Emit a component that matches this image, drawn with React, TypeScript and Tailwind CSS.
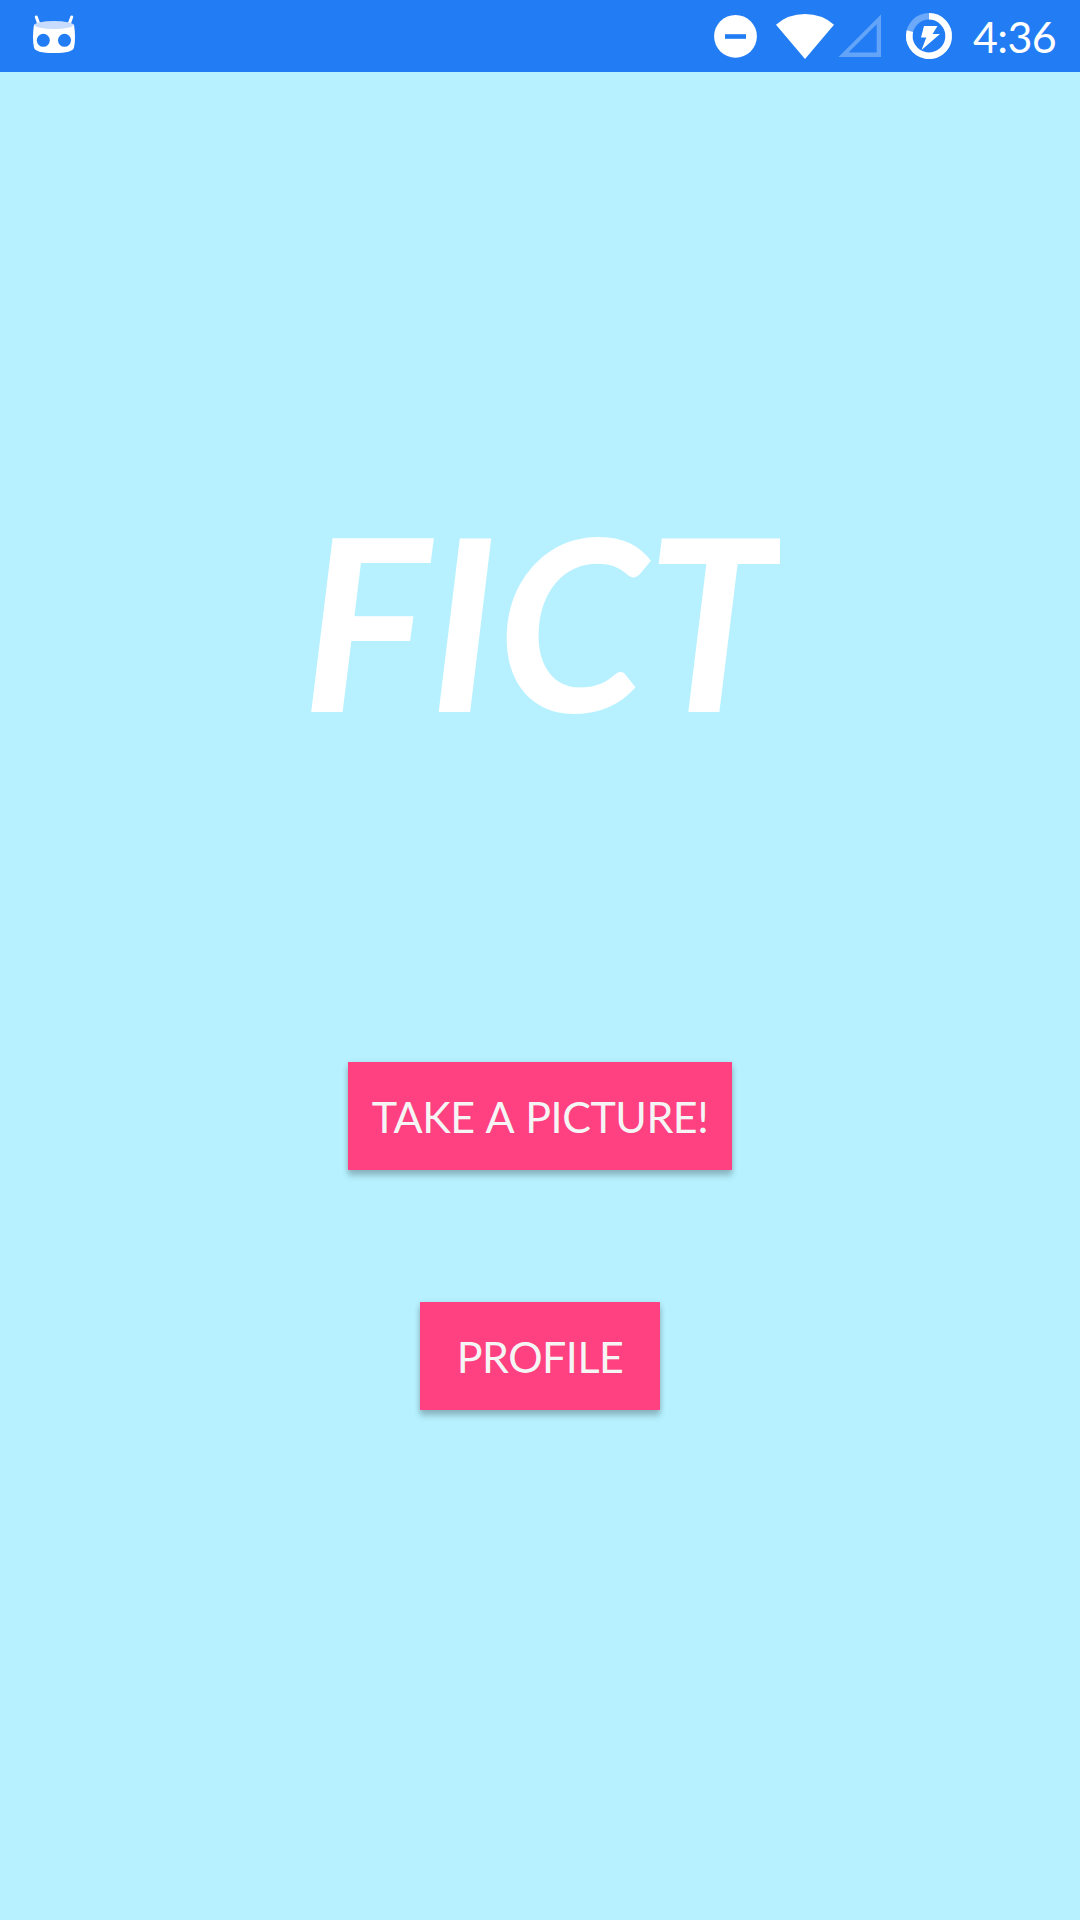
import React from "react";

const BUTTON =
  "flex h-[108px] items-center justify-center bg-[#ff4081] pt-0.5 text-[43px] leading-[52px] tracking-[-0.5px] [word-spacing:2px] whitespace-nowrap text-[#f5f5f5] shadow-[0_6px_6px_rgba(0,0,0,0.2),0_1px_6px_rgba(0,0,0,0.12)]";

function RobotIcon() {
  return (
    <svg className="h-[72px] w-[46px]" viewBox="31 0 46 72" fill="none">
      <path d="M36.3 17L38.5 23M71.7 17L69.5 23" stroke="white" strokeWidth="3" strokeLinecap="round" />
      <path d="M34 24.5Q54 30 74 24.5Q76 38 74 47.5Q73 53 54 53Q35 53 34 47.5Q32 38 34 24.5Z" fill="white" />
      <ellipse cx="54" cy="25" rx="19.5" ry="4" fill="#c8ddfd" />
      <circle cx="43.3" cy="40.3" r="6.5" fill="#227df5" />
      <circle cx="64.5" cy="40.3" r="6.5" fill="#227df5" />
    </svg>
  );
}

function StatusIcons() {
  return (
    <svg className="h-[72px] w-[246px] shrink-0" viewBox="710 0 246 72" fill="none">
      <circle cx="735.5" cy="36.3" r="21.4" fill="white" />
      <rect x="725" y="34.2" width="21" height="4.6" fill="#227df5" />
      <path d="M776 24.7Q788 14 805 14Q822 14 834 24.7L805 59Z" fill="white" />
      <path fillRule="evenodd" d="M838.5 57L881 14.5V57ZM848.5 52.5H876.7V24.3Z" fill="#64a4f8" />
      <circle cx="929" cy="36" r="19.7" stroke="#6ca9f8" strokeWidth="6.6" />
      <path d="M929 16.3A19.7 19.7 0 1 1 909.9 31.1" stroke="white" strokeWidth="6.6" />
      <path d="M924 26H937.5L932.6 34H940L921.5 50L926.3 37.5H921Z" fill="white" />
    </svg>
  );
}

export default function App() {
  return (
    <div className="flex h-[1920px] w-[1080px] flex-col bg-[#b7f1ff] font-['Lato',sans-serif]">
      <header className="flex h-[72px] items-center justify-between bg-[#227df5] pr-[23px] pl-[31px] text-white">
        <RobotIcon />
        <div className="flex items-center">
          <StatusIcons />
          <span className="ml-[17px] w-[84px] pt-0.5 text-[43px] leading-[52px] tracking-[-0.6px]">4:36</span>
        </div>
      </header>
      <main className="flex flex-col items-center">
        <h1 className="mt-[403px] h-[288px] w-[480px] overflow-hidden pl-0.5 text-[240px] leading-[288px] font-bold whitespace-nowrap text-white italic">
          FICT
        </h1>
        <button className={`${BUTTON} mt-[299px] w-[384px]`}>TAKE A PICTURE!</button>
        <button className={`${BUTTON} mt-[132px] w-[240px]`}>PROFILE</button>
      </main>
    </div>
  );
}
